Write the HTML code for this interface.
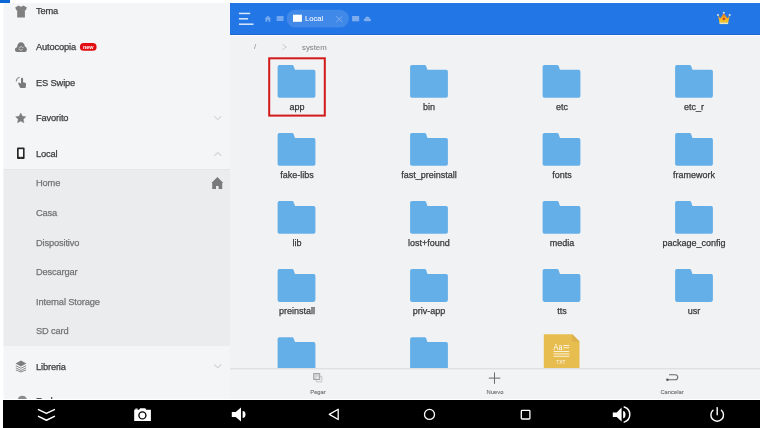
<!DOCTYPE html>
<html><head><meta charset="utf-8">
<style>
*{margin:0;padding:0;box-sizing:border-box}
html,body{width:760px;height:428px;overflow:hidden;background:#fff;font-family:"Liberation Sans",sans-serif}
.a{position:absolute}
.t{position:absolute;white-space:nowrap;line-height:1;-webkit-text-stroke:0.25px currentColor;will-change:transform}
#panel{left:3px;top:3px;width:227px;height:397px;background:#f4f5f7;border-left:1px solid #f9fafa}
#sub{left:3px;top:169px;width:227px;height:177px;background:#ebeced;border-top:1px solid #e5e6e8;border-left:1px solid #f3f4f5}
#hdr{left:230px;top:3px;width:530px;height:32px;background:#2276e5;border-bottom:1px solid #1e66cf}
#content{left:230px;top:35px;width:530px;height:334px;background:#f1f2f4;border-top:1px solid #fbfdff}
#tb{left:230px;top:368px;width:530px;height:31px;background:#f2f3f5;border-top:1px solid #dfe0e2;box-shadow:inset 0 1px 0 #eaebed}
#nav{left:3px;top:400px;width:757px;height:28px;background:#000;z-index:5}
.mi{font-size:9.3px;color:#3c3c3c;left:35.5px;letter-spacing:-0.15px}
.si{font-size:9.3px;color:#747474;left:35.5px;letter-spacing:-0.15px}
.fl{font-size:9px;color:#383838;text-align:center;width:120px}
.tl{font-size:5.8px;color:#6a6a6a;text-align:center;width:60px;-webkit-text-stroke:0.1px currentColor}
svg.ov{position:absolute;left:0;top:0;z-index:6}
</style></head><body>
<div class="a" style="left:0;top:0;width:10px;height:3px;background:#0a68d6"></div>
<div id="panel" class="a"></div>
<div id="sub" class="a"></div>
<div id="hdr" class="a"></div>
<div id="content" class="a"></div>
<div id="tb" class="a"></div>
<div class="a" style="left:3px;top:399px;width:757px;height:1px;background:#fff;z-index:5"></div>
<div id="nav" class="a"></div>

<!-- left menu texts -->
<div class="t mi" style="top:6.8px">Tema</div>
<div class="t mi" style="top:43.1px">Autocopia</div>
<div class="t mi" style="top:79.3px">ES Swipe</div>
<div class="t mi" style="top:114.4px">Favorito</div>
<div class="t mi" style="top:150.1px">Local</div>
<div class="t si" style="top:179.3px">Home</div>
<div class="t si" style="top:208.9px">Casa</div>
<div class="t si" style="top:238.5px">Dispositivo</div>
<div class="t si" style="top:268.1px">Descargar</div>
<div class="t si" style="top:297.9px">Internal Storage</div>
<div class="t si" style="top:327.1px">SD card</div>
<div class="t mi" style="top:362.8px">Libreria</div>
<div class="t mi" style="top:396.7px">Red</div>

<!-- breadcrumb -->
<div class="t" style="left:253.8px;top:43px;font-size:8px;color:#8a8a8a;-webkit-text-stroke:0">/</div>
<div class="t" style="left:301.6px;top:43.7px;font-size:7.8px;color:#8a8a8a;-webkit-text-stroke:0.1px currentColor">system</div>
<svg class="ov" width="760" height="60" style="pointer-events:none"><path d="M282.3 44.4L286.4 47L282.3 49.6" stroke="#c4c4c4" stroke-width="0.8" fill="none"/></svg>

<!-- header text -->
<div class="t" style="left:305px;top:15.2px;font-size:7.6px;color:#e9f1fc;-webkit-text-stroke:0.1px currentColor">Local</div>

<!-- folder labels -->
<div class="t fl" style="left:236.5px;top:103.1px">app</div>
<div class="t fl" style="left:369px;top:103.1px">bin</div>
<div class="t fl" style="left:501.5px;top:103.1px">etc</div>
<div class="t fl" style="left:634px;top:103.1px">etc_r</div>
<div class="t fl" style="left:236.5px;top:171.1px">fake-libs</div>
<div class="t fl" style="left:369px;top:171.1px">fast_preinstall</div>
<div class="t fl" style="left:501.5px;top:171.1px">fonts</div>
<div class="t fl" style="left:634px;top:171.1px">framework</div>
<div class="t fl" style="left:236.5px;top:239.1px">lib</div>
<div class="t fl" style="left:369px;top:239.1px">lost+found</div>
<div class="t fl" style="left:501.5px;top:239.1px">media</div>
<div class="t fl" style="left:634px;top:239.1px">package_config</div>
<div class="t fl" style="left:236.5px;top:307.1px">preinstall</div>
<div class="t fl" style="left:369px;top:307.1px">priv-app</div>
<div class="t fl" style="left:501.5px;top:307.1px">tts</div>
<div class="t fl" style="left:634px;top:307.1px">usr</div>

<!-- toolbar labels -->
<div class="t tl" style="left:288.3px;top:389.5px">Pegar</div>
<div class="t tl" style="left:465px;top:389.5px">Nuevo</div>
<div class="t tl" style="left:641.5px;top:389.5px">Cancelar</div>

<svg class="ov" width="760" height="428" viewBox="0 0 760 428">
<defs>
 <path id="fold" d="M1.8 0H14.6Q15.6 0 16 1L17.4 4.9H36Q37.8 4.9 37.8 6.7V31Q37.8 32.8 36 32.8H1.8Q0 32.8 0 31V1.8Q0 0 1.8 0Z" fill="#65afe8"/>
</defs>
<!-- folders -->
<use href="#fold" x="277.6" y="64.9"/>
<use href="#fold" x="410.1" y="64.9"/>
<use href="#fold" x="542.6" y="64.9"/>
<use href="#fold" x="675.1" y="64.9"/>
<use href="#fold" x="277.6" y="133"/>
<use href="#fold" x="410.1" y="133"/>
<use href="#fold" x="542.6" y="133"/>
<use href="#fold" x="675.1" y="133"/>
<use href="#fold" x="277.6" y="201.05"/>
<use href="#fold" x="410.1" y="201.05"/>
<use href="#fold" x="542.6" y="201.05"/>
<use href="#fold" x="675.1" y="201.05"/>
<use href="#fold" x="277.6" y="269.1"/>
<use href="#fold" x="410.1" y="269.1"/>
<use href="#fold" x="542.6" y="269.1"/>
<use href="#fold" x="675.1" y="269.1"/>
<g clip-path="url(#cl)">
<use href="#fold" x="277.6" y="337.2"/>
<use href="#fold" x="410.1" y="337.2"/>
</g>
<clipPath id="cl"><rect x="230" y="35" width="530" height="333"/></clipPath>
<!-- TXT icon -->
<g clip-path="url(#cl)">
<path d="M543.8 334.3H572.3L579.5 341.5V375H543.8Z" fill="#e8bd4f"/>
<path d="M572.3 334.3V341.5H579.5Z" fill="#dcb04a"/>
<text x="553.6" y="349.8" font-size="8.4" fill="#fff" textLength="8.8" lengthAdjust="spacingAndGlyphs" font-family="Liberation Sans">Aa</text>
<rect x="563.3" y="345" width="6" height="0.8" fill="#fff"/>
<rect x="563.3" y="347.4" width="6" height="0.8" fill="#fff"/>
<rect x="553.6" y="351.2" width="15.7" height="0.8" fill="#fff"/>
<rect x="553.6" y="353.5" width="15.7" height="0.8" fill="#fff"/>
<rect x="553.6" y="355.8" width="15.7" height="0.8" fill="#fff"/>
<text x="560.8" y="364" font-size="4.8" fill="#fff" fill-opacity="0.9" text-anchor="middle" font-family="Liberation Sans">TXT</text>
</g>
<!-- red selection box -->
<rect x="269.2" y="58.3" width="55.6" height="57.3" fill="none" stroke="#d21a1a" stroke-width="2"/>

<!-- hamburger -->
<g stroke="#dbe9fb" stroke-width="1.5">
<line x1="238.9" y1="13.45" x2="250.2" y2="13.45"/>
<line x1="238.9" y1="18.8" x2="248.1" y2="18.8"/>
<line x1="238.9" y1="24.2" x2="253.5" y2="24.2"/>
</g>
<!-- header pill -->
<rect x="286.6" y="9.7" width="62.3" height="17.9" rx="8.95" fill="#ffffff" fill-opacity="0.14"/>
<!-- header small icons -->
<path d="M267.9 15.7L264.8 18.6H265.4V21.8H267.2V19.9H268.6V21.8H270.4V18.6H271Z" fill="#74a9f0"/>
<rect x="276.6" y="16" width="7" height="5" fill="#6fa6ef"/>
<rect x="293" y="14.7" width="8.9" height="7.1" fill="#fff"/>
<g stroke="#8fb8ef" stroke-width="0.8"><line x1="336.2" y1="16.2" x2="342.4" y2="22.2"/><line x1="342.4" y1="16.2" x2="336.2" y2="22.2"/></g>
<rect x="352.1" y="16" width="7.1" height="5.3" fill="#7eacec"/>
<path d="M365 21.3Q363.7 21.3 363.7 20Q363.7 18.8 364.9 18.7Q365.4 16.4 367.4 16.4Q369.4 16.4 369.8 18.6Q371 18.8 371 20Q371 21.3 369.7 21.3Z" fill="#7eacec"/>
<!-- crown -->
<linearGradient id="cg" x1="0" y1="0" x2="0" y2="1"><stop offset="0" stop-color="#e0702c"/><stop offset="0.45" stop-color="#f0a023"/><stop offset="0.75" stop-color="#f6bf22"/><stop offset="1" stop-color="#f7c62c"/></linearGradient>
<path d="M718 15.2L720.4 18.3L723.8 13.1L727.3 18.3L729.7 15.2L728.2 22.7H719.5Z" fill="url(#cg)"/>
<rect x="719.5" y="22.5" width="8.7" height="1.6" fill="#f2e6b2"/>
<circle cx="723.9" cy="19" r="1.2" fill="#c84a1c"/>
<circle cx="718" cy="15" r="1.05" fill="#cfe6ef"/>
<circle cx="723.8" cy="12.7" r="1.05" fill="#cfe6ef"/>
<circle cx="729.7" cy="15" r="1.05" fill="#cfe6ef"/>

<!-- left icons -->
<path d="M18.6 5.6L15.2 7.6L16.4 10.4L17.2 10.1V17.5H24.9V10.1L25.7 10.4L26.9 7.6L23.4 5.6Q21 7.8 18.6 5.6Z" fill="#808080"/>
<path d="M16.8 51.9Q14.9 51.9 14.9 49.8Q14.9 47.5 17.1 47.2C17.3 43.8 19 42.2 21 42.2C23 42.2 24.7 43.8 24.9 46.6Q26.9 47 26.9 49.4Q26.9 51.9 24.8 51.9Z" fill="#7a7a7a"/>
<path d="M19.4 48Q19.9 46.6 21.3 46.6Q22.2 46.7 22.7 47.4M22.6 48.9Q22.1 50.3 20.7 50.3Q19.8 50.2 19.3 49.5" stroke="#dcdcdc" stroke-width="0.8" fill="none"/>
<path d="M23.3 46.7V48.1H21.9Z M18.7 50.2V48.8H20.1Z" fill="#dcdcdc"/>
<!-- new badge -->
<rect x="79.9" y="43.1" width="16.7" height="7.7" rx="3.85" fill="#e20d12"/>
<text x="88.25" y="48.9" font-size="5.4" font-weight="bold" fill="#fff" text-anchor="middle" font-family="Liberation Sans">new</text>
<path d="M21 83.6L19.5 82.7Q18 82.3 18.2 83.8L20.3 88H25.5L26.1 84.3Q26.2 83.1 25 82.8L23.1 82.2V78.8Q23.1 77.7 22.05 77.7Q21 77.7 21 78.8Z" fill="#7a7a7a"/>
<path d="M16.3 81.6Q16.4 78.2 19.6 77.3" stroke="#8a8a8a" stroke-width="1.1" fill="none"/>
<path d="M20.75 113.10L22.31 116.26L25.79 116.76L23.27 119.22L23.87 122.69L20.75 121.05L17.63 122.69L18.23 119.22L15.71 116.76L19.19 116.26Z" fill="#7c7c7c" stroke="#7c7c7c" stroke-width="0.5" stroke-linejoin="round"/>
<rect x="17" y="147.6" width="7.6" height="11.5" rx="1" fill="#262626"/>
<rect x="18.7" y="149.2" width="4.3" height="7.6" fill="#fdfdfd"/>
<rect x="20.3" y="157.4" width="1" height="0.9" fill="#888"/>
<path d="M15.6 363.6L21 360.6L26.3 363.6L21 366.4Z" fill="#7e7e7e"/>
<path d="M15.8 365.6L21 368.3L26.1 365.6M15.8 367.8L21 370.5L26.1 367.8M15.8 369.9L21 372L26.1 369.9" stroke="#8a8a8a" stroke-width="1" fill="none"/>
<path d="M17.8 399A4.8 4.8 0 0 1 26.8 399Z" fill="#8a8a8a"/>
<!-- chevrons -->
<path d="M214.3 116.3L217.8 119.6L221.3 116.3" stroke="#d3d3d3" stroke-width="1.1" fill="none"/>
<path d="M214.3 155.8L217.8 152.5L221.3 155.8" stroke="#d3d3d3" stroke-width="1.1" fill="none"/>
<path d="M214.3 364.5L217.8 367.8L221.3 364.5" stroke="#d3d3d3" stroke-width="1.1" fill="none"/>
<!-- home right -->
<path d="M217.4 176.9L211.4 183H212.2V189H216V186H218.6V189H222.2V183H223.3Z" fill="#7a7a7a"/>

<!-- toolbar icons -->
<path d="M319.8 376.3H321.8V381.8H316.2V379.7" fill="none" stroke="#c4c4c4" stroke-width="1"/>
<rect x="313.7" y="373.5" width="6" height="6" fill="#d2d2d2" stroke="#a3a3a3" stroke-width="1"/>
<rect x="316.5" y="376.8" width="1.8" height="1.8" fill="#f4f4f4"/>
<g stroke="#6a6a6a" stroke-width="1"><line x1="494.5" y1="372.4" x2="494.5" y2="383.8"/><line x1="488.8" y1="378.1" x2="500.3" y2="378.1"/></g>
<path d="M669 374.7H675.2A2.55 2.55 0 0 1 675.2 379.8H667.3" stroke="#6a6a6a" stroke-width="1.1" fill="none"/>
<circle cx="667.4" cy="379.8" r="1.25" fill="#555"/>

<!-- nav icons -->
<g stroke="#fff" stroke-width="1.5" fill="none" stroke-linecap="round" stroke-linejoin="round">
<path d="M38.5 409.6L46.4 413.4L54.4 409.6"/>
<path d="M38.5 416.4L46.4 420.2L54.4 416.4"/>
<path d="M338.2 409.3V419.5L329.3 414.4Z" stroke-width="1.3"/>
<circle cx="429.5" cy="414.4" r="5" stroke-width="1.3"/>
<rect x="521.3" y="410.4" width="8.6" height="8.6" rx="0.8" stroke-width="1.3"/>
<path d="M713 410.2A6.3 6.3 0 1 0 721.4 410.2" stroke-width="1.4"/>
<line x1="717.2" y1="407.6" x2="717.2" y2="414.8" stroke-width="1.4"/>
<path d="M624.2 407A7.9 7.9 0 0 1 624.2 422.1" stroke-width="1.5"/>

</g>
<path d="M231.8 412.1H235.7L241 407.5V421.6L235.7 417H231.8Z" fill="#fff"/>
<path d="M612.8 412.4H616.7L621.6 407.5V421.6L616.7 417H612.8Z" fill="#fff"/>
<path d="M623.1 410.9A2.4 3.7 0 0 1 623.1 418.3Z" fill="#fff"/>
<path d="M242.6 411.1A2.9 3.45 0 0 1 242.6 418Z" fill="#fff"/>
<path d="M134.2 409.8H139L140.2 408.2H145.2L146.3 409.8H150.9V421H134.2Z" fill="#fff"/>
<path d="M134.8 409.8L135.6 408.6H137.4L138 409.8Z" fill="#fff"/>
<circle cx="142.4" cy="415.4" r="3.5" fill="none" stroke="#000" stroke-width="1.35"/>
</svg>
</body></html>
